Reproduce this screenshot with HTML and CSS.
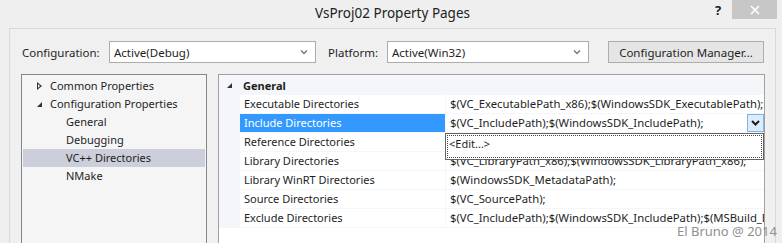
FILE: index.html
```html
<!DOCTYPE html>
<html lang="en">
<head>
    <meta charset="UTF-8">
    <title>VsProj02 Property Pages</title>
    <link rel="stylesheet" href="styles.css">
</head>
<body>

<div class="window">
    <div class="titlebar">
        <span class="title">VsProj02 Property Pages</span>
        <span class="help">?</span>
        <span class="close">
            <svg width="10" height="10" viewBox="0 0 10 10"><path d="M1 1 L9 9 M9 1 L1 9" stroke="#fff" stroke-width="1.6"/></svg>
        </span>
    </div>

    <div class="frame">
        <div class="config-bar">
            <label class="config-label">Configuration:</label>
            <div class="combo combo-config">
                <span>Active(Debug)</span>
                <svg class="chev" width="8" height="6" viewBox="0 0 8 6"><path d="M1 1.5 L4 4.5 L7 1.5" fill="none" stroke="#7a7a7a" stroke-width="1.4"/></svg>
            </div>
            <label class="platform-label">Platform:</label>
            <div class="combo combo-platform">
                <span>Active(Win32)</span>
                <svg class="chev" width="8" height="6" viewBox="0 0 8 6"><path d="M1 1.5 L4 4.5 L7 1.5" fill="none" stroke="#7a7a7a" stroke-width="1.4"/></svg>
            </div>
            <button class="btn">Configuration Manager...</button>
        </div>

        <div class="panes">
            <ul class="tree">
                <li class="node"><span class="twisty twisty-closed"></span>Common Properties</li>
                <li class="node"><span class="twisty twisty-open"></span>Configuration Properties</li>
                <li class="leaf">General</li>
                <li class="leaf">Debugging</li>
                <li class="leaf selected">VC++ Directories</li>
                <li class="leaf">NMake</li>
            </ul>

            <div class="grid">
                <div class="rows">
                    <div class="category"><span class="twisty twisty-open"></span>General</div>
                    <div class="row">
                        <div class="name">Executable Directories</div>
                        <div class="value">$(VC_ExecutablePath_x86);$(WindowsSDK_ExecutablePath);$(VS_ExecutablePath);$(MSBuild_ExecutablePath)</div>
                    </div>
                    <div class="row active">
                        <div class="name">Include Directories</div>
                        <div class="value">
                            $(VC_IncludePath);$(WindowsSDK_IncludePath);
                            <span class="drop-btn">
                                <svg width="9" height="6" viewBox="0 0 9 6"><path d="M1 1 L4.5 4.5 L8 1" fill="none" stroke="#1e1e1e" stroke-width="2"/></svg>
                            </span>
                            <div class="popup"><div class="popup-focus">&lt;Edit...&gt;</div></div>
                        </div>
                    </div>
                    <div class="row">
                        <div class="name">Reference Directories</div>
                        <div class="value">$(VC_ReferencesPath_x86);</div>
                    </div>
                    <div class="row">
                        <div class="name">Library Directories</div>
                        <div class="value">$(VC_LibraryPath_x86);$(WindowsSDK_LibraryPath_x86);</div>
                    </div>
                    <div class="row">
                        <div class="name">Library WinRT Directories</div>
                        <div class="value">$(WindowsSDK_MetadataPath);</div>
                    </div>
                    <div class="row">
                        <div class="name">Source Directories</div>
                        <div class="value">$(VC_SourcePath);</div>
                    </div>
                    <div class="row">
                        <div class="name">Exclude Directories</div>
                        <div class="value">$(VC_IncludePath);$(WindowsSDK_IncludePath);$(MSBuild_ExecutablePath);$(VC_LibraryPath_x86)</div>
                    </div>
                </div>
            </div>
        </div>
    </div>

    <div class="watermark">El Bruno @ 2014</div>
</div>

</body>
</html>
```

FILE: styles.css
```css
body {
    margin: 0;
    font-family: "Noto Sans", sans-serif;
    font-size: 11px;
    color: #1e1e1e;
}
.window {
    position: relative;
    width: 782px;
    height: 243px;
    overflow: hidden;
    background: #efefef;
}
.titlebar {
    position: relative;
    height: 28px;
    display: flex;
    justify-content: center;
}
.title {
    font-size: 13.5px;
    line-height: 27px;
    color: #222;
    padding-left: 3px;
}
.help {
    position: absolute;
    left: 715px;
    top: 1px;
    font-weight: bold;
    font-size: 13px;
}
.close {
    position: absolute;
    left: 732px;
    top: 0;
    width: 45px;
    height: 19px;
    background: #c7c7c7;
    display: flex;
    align-items: center;
    justify-content: center;
}
.frame {
    margin-left: 9px;
    width: 767px;
    height: 215px;
    box-sizing: border-box;
    border: 1px solid #dadada;
    border-bottom: none;
    background: #f0f0f0;
    padding: 12px 10px 0 11px;
}
.config-bar {
    display: flex;
    align-items: center;
    height: 22px;
    font-size: 11.5px;
}
.config-label {
    width: 88px;
    padding-left: 1px;
    box-sizing: border-box;
}
.platform-label {
    width: 59px;
    margin-left: 12px;
}
.combo {
    height: 22px;
    box-sizing: border-box;
    border: 1px solid #acacac;
    background: #fff;
    display: flex;
    align-items: center;
    justify-content: space-between;
    padding: 0 7px 0 4px;
}
.combo-config {
    width: 207px;
}
.combo-platform {
    width: 202px;
}
.btn {
    margin-left: 19px;
    width: 156px;
    height: 22px;
    border: 1px solid #adadad;
    background: #e5e5e5;
    font-family: inherit;
    font-size: inherit;
    color: inherit;
    padding: 0;
}
.panes {
    display: flex;
    gap: 11px;
    margin-top: 11px;
    height: 180px;
}
.tree {
    flex: none;
    list-style: none;
    margin: 0;
    width: 186px;
    box-sizing: border-box;
    border: 1px solid #828790;
    background: #f5f5f5;
    padding: 1px 1px 0;
}
.tree li {
    height: 18px;
    line-height: 18px;
    display: flex;
    align-items: center;
    white-space: nowrap;
}
.tree .node {
    padding-left: 12px;
}
.tree .node:first-child {
    margin-top: 1px;
}
.tree .leaf {
    padding-left: 43px;
}
.tree .selected {
    background: #cccedb;
}
.twisty {
    display: inline-block;
    width: 0;
    height: 0;
}
.twisty-closed {
    border-top: 4px solid transparent;
    border-bottom: 4px solid transparent;
    border-left: 5px solid #333;
    position: relative;
    margin-left: 2px;
    margin-right: 8px;
}
.twisty-closed::after {
    content: "";
    position: absolute;
    left: -4px;
    top: -2px;
    border-top: 2px solid transparent;
    border-bottom: 2px solid transparent;
    border-left: 2.5px solid #f5f5f5;
}
.twisty-open {
    border-left: 5px solid transparent;
    border-bottom: 5px solid #333;
    margin-left: 2px;
    margin-right: 8px;
}
.grid {
    flex: 1;
    min-width: 0;
    overflow: hidden;
    border: 1px solid #a0a0a0;
    background: #fff;
}
.rows {
    background: #f4f6fa;
    padding-bottom: 1px;
}
.category {
    height: 20px;
    display: flex;
    align-items: center;
    font-weight: bold;
    padding-left: 8px;
}
.category .twisty-open {
    margin-left: 0;
    margin-right: 11px;
}
.row {
    display: flex;
    gap: 1px;
    height: 18px;
    line-height: 18px;
    margin-left: 21px;
    margin-bottom: 1px;
}
.row:last-child {
    margin-bottom: 0;
}
.name {
    flex: none;
    width: 205px;
    padding-left: 4px;
    box-sizing: border-box;
    background: #fff;
    white-space: nowrap;
}
.value {
    position: relative;
    flex: 1;
    min-width: 0;
    padding-left: 4px;
    background: #fff;
    white-space: nowrap;
    font-size: 11.3px;
}
.row:not(.active) .value {
    overflow: hidden;
}
.active .name {
    background: #3399ff;
    color: #fff;
}
.drop-btn {
    position: absolute;
    right: 0;
    top: 0;
    width: 17px;
    height: 18px;
    box-sizing: border-box;
    border: 1px solid #7eb4ea;
    background: #dcecfc;
    display: flex;
    align-items: center;
    justify-content: center;
}
.popup {
    position: absolute;
    left: -1px;
    right: 0;
    top: 19px;
    height: 27px;
    box-sizing: border-box;
    border: 1px solid #646464;
    background: #fff;
    padding: 1px;
    z-index: 2;
}
.popup-focus {
    height: 100%;
    box-sizing: border-box;
    border: 1px dotted #444;
    padding-left: 1px;
    line-height: 15px;
    font-size: 11px;
}
.watermark {
    position: absolute;
    left: 677px;
    top: 222px;
    font-size: 13px;
    color: #909090;
    z-index: 3;
}
```
